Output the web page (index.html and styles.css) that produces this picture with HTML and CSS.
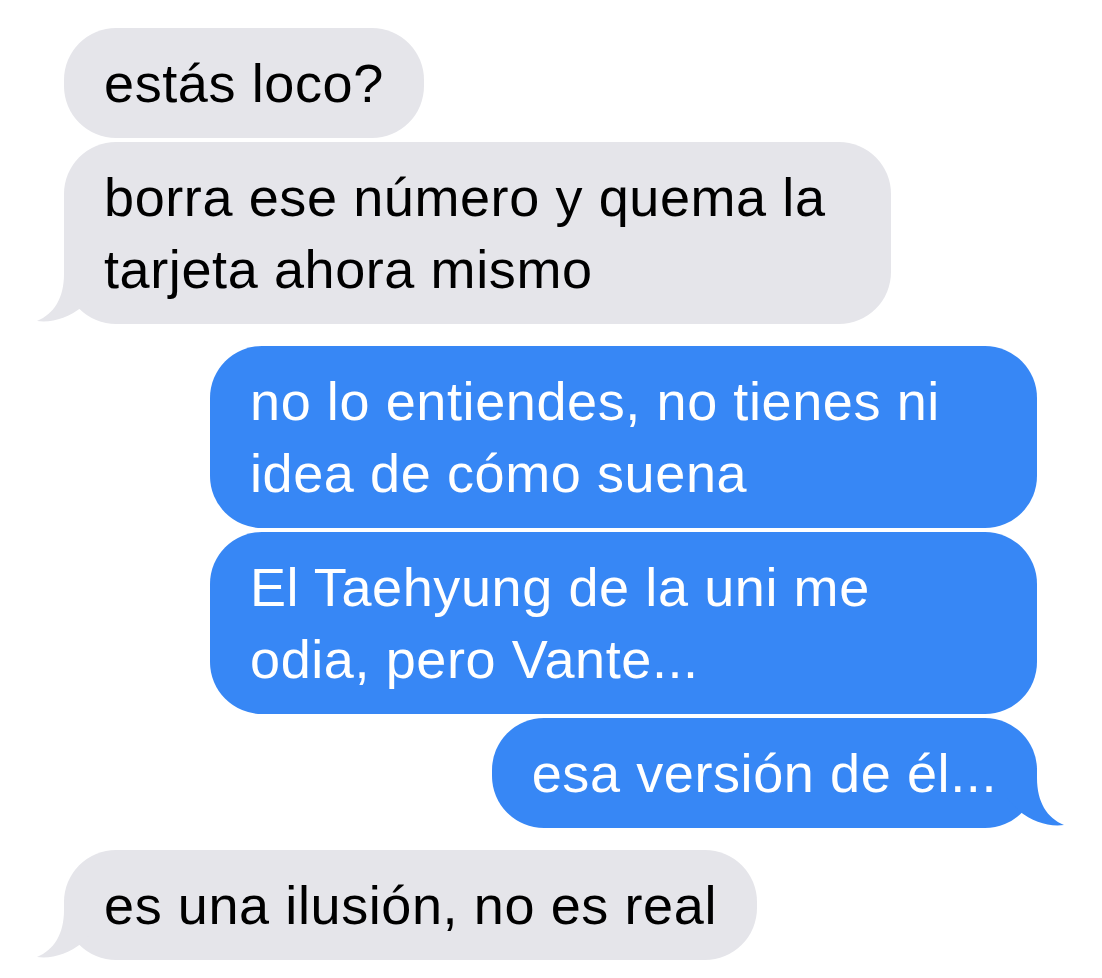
FILE: index.html
```html
<!DOCTYPE html>
<html lang="es">
<head>
<meta charset="utf-8">
<title>Mensajes</title>
<link rel="stylesheet" href="styles.css">
</head>
<body>
<div class="chat">
  <div class="group them">
    <div class="msg">estás loco?</div>
    <div class="msg has-tail">borra ese número y quema la tarjeta ahora mismo<svg class="tail" viewBox="-30 -60 60 60" width="60" height="60" aria-hidden="true"><path d="M0,-60 L0,-50 C0,-26 -10,-10 -27,-3 C-12,-1 4,-6 18,-17 L30,-30 L30,-60 Z"/></svg></div>
  </div>
  <div class="group me">
    <div class="msg">no lo entiendes, no tienes ni idea de cómo suena</div>
    <div class="msg">El Taehyung de la uni me odia, pero Vante...</div>
    <div class="msg has-tail">esa versión de él...<svg class="tail" viewBox="-30 -60 60 60" width="60" height="60" aria-hidden="true"><path d="M0,-60 L0,-50 C0,-26 -10,-10 -27,-3 C-12,-1 4,-6 18,-17 L30,-30 L30,-60 Z"/></svg></div>
  </div>
  <div class="group them">
    <div class="msg has-tail">es una ilusión, no es real<svg class="tail" viewBox="-30 -60 60 60" width="60" height="60" aria-hidden="true"><path d="M0,-60 L0,-50 C0,-26 -10,-10 -27,-3 C-12,-1 4,-6 18,-17 L30,-30 L30,-60 Z"/></svg></div>
  </div>
</div>
</body>
</html>
```
FILE: styles.css
```css
html, body {
  margin: 0;
  background: #ffffff;
}

body {
  font-family: "Liberation Sans", Arial, Helvetica, sans-serif;
}

.chat {
  display: flex;
  flex-direction: column;
  gap: 22px;
  padding: 28px 65px 0 64px;
}

.group {
  display: flex;
  flex-direction: column;
  gap: 4px;
}

.them {
  align-items: flex-start;
}

.me {
  align-items: flex-end;
}

.msg {
  position: relative;
  box-sizing: border-box;
  max-width: 827px;
  padding: 19px 40px;
  border-radius: 52px;
  font-size: 54px;
  line-height: 72px;
  letter-spacing: 0.6px;
}

.them .msg {
  background: #e5e5ea;
  color: #000000;
}

.me .msg {
  background: #3787f5;
  color: #ffffff;
}

.tail {
  position: absolute;
  bottom: 0;
  left: -30px;
  display: block;
}

.them .tail path {
  fill: #e5e5ea;
}

.me .tail {
  left: auto;
  right: -30px;
  transform: scaleX(-1);
}

.me .tail path {
  fill: #3787f5;
}
```
